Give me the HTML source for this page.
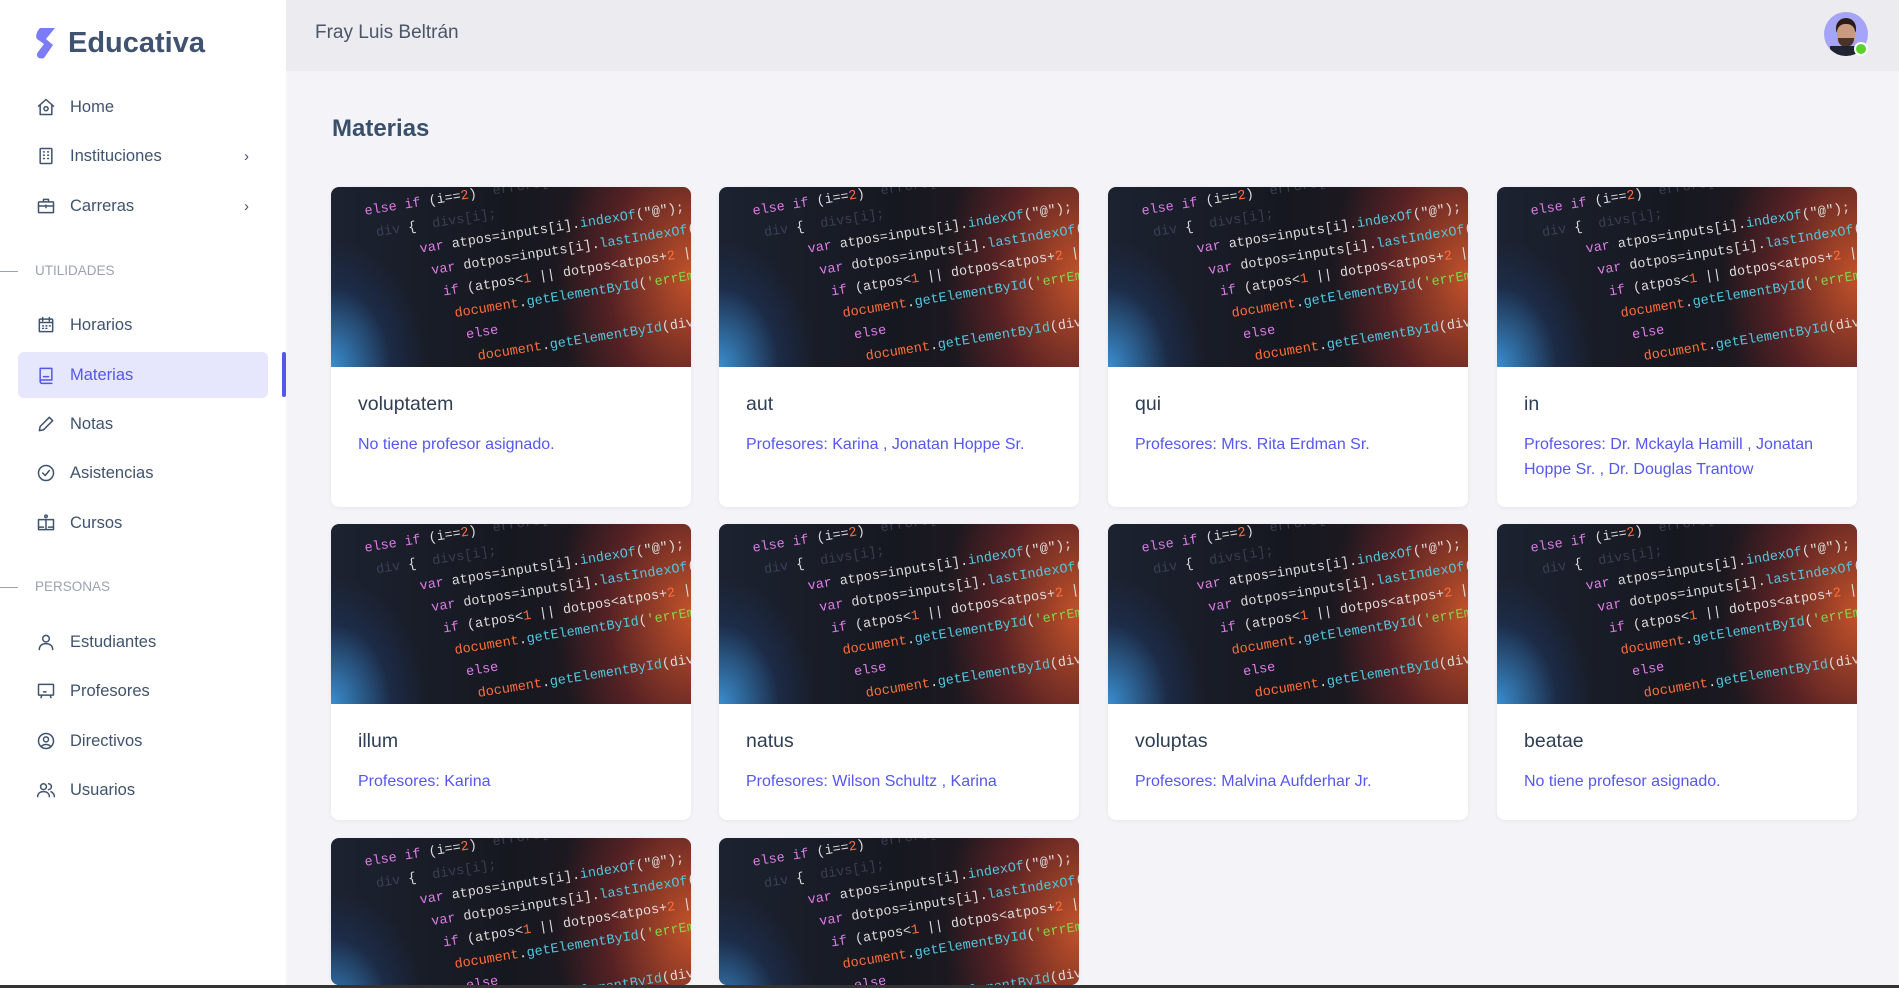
<!DOCTYPE html>
<html><head><meta charset="utf-8"><style>
*{box-sizing:border-box;margin:0;padding:0}
html{width:1899px;height:988px;overflow:hidden}
body{width:1899px;height:988px;overflow:hidden;background:#f4f4f8;font-family:"Liberation Sans",sans-serif;position:relative}
.sb{position:absolute;left:0;top:0;width:286px;height:988px;background:#fff}
.logo{position:absolute;left:34px;top:26px;display:flex;align-items:center}
.logo span{font-size:29px;font-weight:bold;color:#3f5370;margin-left:10px}
.it{position:absolute;left:18px;width:250px;height:46px;display:flex;align-items:center;color:#40536e;font-size:16.5px}
.it svg{position:absolute;left:18px;width:20px;height:20px;fill:none;stroke:#40536e;stroke-width:1.8;stroke-linecap:round;stroke-linejoin:round}
.it b{font-weight:normal;position:absolute;left:52px}
.it .ch{position:absolute;left:226px;font-size:15px}
.act{background:#e6e6fc;border-radius:6px;color:#5457e8}
.act svg{stroke:#5457e8}
.sec{position:absolute;left:35px;font-size:13.5px;color:#9aa3b2}
.sec:before{content:"";position:absolute;left:-35px;top:8px;width:18px;height:1px;background:#9aa3b2}
.hd{position:absolute;left:286px;top:0;width:1613px;height:71px;background:#ececf0}
.hd .t{position:absolute;left:29px;top:22px;font-size:19px;color:#4a5568}
.av{position:absolute;left:1824px;top:12px;width:44px;height:44px;border-radius:50%;background:#a6a4f7;overflow:hidden}
.h1{position:absolute;left:332px;top:115px;font-size:24px;font-weight:bold;color:#3a4f6a}
.card{position:absolute;width:360px;background:#fff;border-radius:8px;overflow:hidden;box-shadow:0 1px 4px rgba(0,0,0,.06)}
.img{height:180px;position:relative;overflow:hidden;background:radial-gradient(ellipse 120px 160px at 0% 100%,#3a8ed0,rgba(30,60,110,.4) 50%,transparent 80%),radial-gradient(ellipse 150px 220px at 100% 50%,#c2522a,rgba(130,40,40,.55) 55%,transparent 90%),linear-gradient(90deg,#1c2230,#161820 50%,#2a1a1e);font-family:"Liberation Mono",monospace}
.code{position:absolute;left:32px;top:14px;transform:rotate(-9deg);transform-origin:0 0;font-size:13.5px;line-height:23px;white-space:pre;color:#ddd}
.k{color:#e07ce8}.o{color:#ff6e3a}.c{color:#4fc8e0}.g{color:#7fd84a}.f{color:rgba(120,130,160,.35)}
.ct{padding:26px 27px 0;}
.ct h3{font-weight:normal;font-size:19.5px;color:#2f3e54;margin-bottom:16px}
.ct p{font-size:16px;color:#5557f0;line-height:25px}
</style></head><body>
<div class="sb">
 <div class="logo"><svg width="24" height="34" viewBox="0 0 24 34"><path d="M6 2h15l-9 11 7 6-9 13c-5 2-9-2-6-6l6-8-7-5c-2-3 0-8 3-11z" fill="#7c7cf7"/></svg><span>Educativa</span></div>
 <div class="it" style="top:84px"><svg viewBox="0 0 24 24"><path d="M3 11l9-8 9 8M5 9v12h14V9"/><circle cx="12" cy="14" r="2.5"/></svg><b>Home</b></div>
 <div class="it" style="top:133px"><svg viewBox="0 0 24 24"><rect x="5" y="3" width="14" height="18" rx="1"/><path d="M9 7h1M14 7h1M9 11h1M14 11h1M9 15h1M14 15h1"/></svg><b>Instituciones</b><span class="ch">›</span></div>
 <div class="it" style="top:183px"><svg viewBox="0 0 24 24"><rect x="3" y="7" width="18" height="13" rx="1"/><path d="M9 7V4h6v3M3 12h18M12 11v3"/></svg><b>Carreras</b><span class="ch">›</span></div>
 <div class="sec" style="top:263px">UTILIDADES</div>
 <div class="it" style="top:302px"><svg viewBox="0 0 24 24"><rect x="4" y="5" width="16" height="15" rx="1"/><path d="M8 3v4M16 3v4M4 9h16M8 13h1M12 13h1M16 13h1M8 16h1M12 16h1"/></svg><b>Horarios</b></div>
 <div class="it act" style="top:352px"><svg viewBox="0 0 24 24"><path d="M5 4h14v14H7a2 2 0 000 4h12M5 4v16"/><path d="M9 14h6"/></svg><b>Materias</b></div>
 <div style="position:absolute;left:282px;top:352px;width:4px;height:45px;background:#5457e8;border-radius:2px"></div>
 <div class="it" style="top:401px"><svg viewBox="0 0 24 24"><path d="M4 20l1-5L16 4l4 4L9 19z"/></svg><b>Notas</b></div>
 <div class="it" style="top:450px"><svg viewBox="0 0 24 24"><circle cx="12" cy="12" r="9"/><path d="M8 12l3 3 5-6"/></svg><b>Asistencias</b></div>
 <div class="it" style="top:500px"><svg viewBox="0 0 24 24"><circle cx="12" cy="4" r="1.5"/><path d="M3 8h18v12H3zM12 8v12M3 17h6M15 17h6"/></svg><b>Cursos</b></div>
 <div class="sec" style="top:579px">PERSONAS</div>
 <div class="it" style="top:619px"><svg viewBox="0 0 24 24"><circle cx="12" cy="8" r="4"/><path d="M4 21c0-5 4-7 8-7s8 2 8 7"/></svg><b>Estudiantes</b></div>
 <div class="it" style="top:668px"><svg viewBox="0 0 24 24"><rect x="3" y="4" width="18" height="13" rx="1"/><path d="M7 17l-1 3M17 17l1 3M9 13h3"/></svg><b>Profesores</b></div>
 <div class="it" style="top:718px"><svg viewBox="0 0 24 24"><circle cx="12" cy="12" r="9"/><circle cx="12" cy="10" r="3"/><path d="M6.5 18.5c3-3 8-3 11 0"/></svg><b>Directivos</b></div>
 <div class="it" style="top:767px"><svg viewBox="0 0 24 24"><circle cx="9" cy="8" r="3.5"/><path d="M2 20c0-4 3-6 7-6s7 2 7 6M15 4.5a3.5 3.5 0 010 7M18 14c2 1 4 3 4 6"/></svg><b>Usuarios</b></div>
</div>
<div class="hd"><div class="t">Fray Luis Beltrán</div>
 <div class="av" style="left:1538px"><div style="position:absolute;left:12px;top:6px;width:20px;height:16px;border-radius:10px 10px 4px 4px;background:#2a1d18"></div><div style="position:absolute;left:13px;top:12px;width:18px;height:22px;border-radius:8px;background:#c99a80"></div><div style="position:absolute;left:14px;top:26px;width:16px;height:9px;border-radius:0 0 8px 8px;background:#4a342a"></div><div style="position:absolute;left:6px;top:34px;width:32px;height:14px;background:#1f2430"></div></div>
 <div style="position:absolute;left:1568px;top:42px;width:14px;height:14px;border-radius:50%;background:#5bd12a;border:2.5px solid #fff"></div>
</div>
<div class="h1">Materias</div>

<div id="cards"></div>
<div style="position:absolute;left:0;top:985px;width:1899px;height:3px;background:#333"></div>
<script>
var data=[["voluptatem","No tiene profesor asignado."],["aut","Profesores: Karina , Jonatan Hoppe Sr."],["qui","Profesores: Mrs. Rita Erdman Sr."],["in","Profesores: Dr. Mckayla Hamill , Jonatan Hoppe Sr. , Dr. Douglas Trantow"],["illum","Profesores: Karina"],["natus","Profesores: Wilson Schultz , Karina"],["voluptas","Profesores: Malvina Aufderhar Jr."],["beatae","No tiene profesor asignado."],["",""],["",""]];
var xs=[331,719,1108,1497],ys=[187,524,838],hs=[320,296,147];
var code='<div class="code"><span class="k">else if</span> (i==<span class="o">2</span>)  <span class="f">errors[i];</span>\n <span class="f">div</span> {  <span class="f">divs[i];</span>\n      <span class="k">var</span> atpos=inputs[i].<span class="c">indexOf</span>("@");\n       <span class="k">var</span> dotpos=inputs[i].<span class="c">lastIndexOf</span>(".");\n        <span class="k">if</span> (atpos&lt;<span class="o">1</span> || dotpos&lt;atpos+<span class="o">2</span> ||\n         <span class="o">document</span>.<span class="c">getElementById</span>(<span class="g">\'errEmail\'</span>)\n          <span class="k">else</span>\n           <span class="o">document</span>.<span class="c">getElementById</span>(div).<span class="o">inner</span></div>';
var h='';
data.forEach(function(d,i){var r=Math.floor(i/4),c=i%4;
h+='<div class="card" style="left:'+xs[c]+'px;top:'+ys[r]+'px;height:'+hs[r]+'px"><div class="img">'+code+'</div><div class="ct"><h3>'+d[0]+'</h3><p>'+d[1]+'</p></div></div>';});
document.getElementById('cards').innerHTML=h;
</script>
</body></html>
